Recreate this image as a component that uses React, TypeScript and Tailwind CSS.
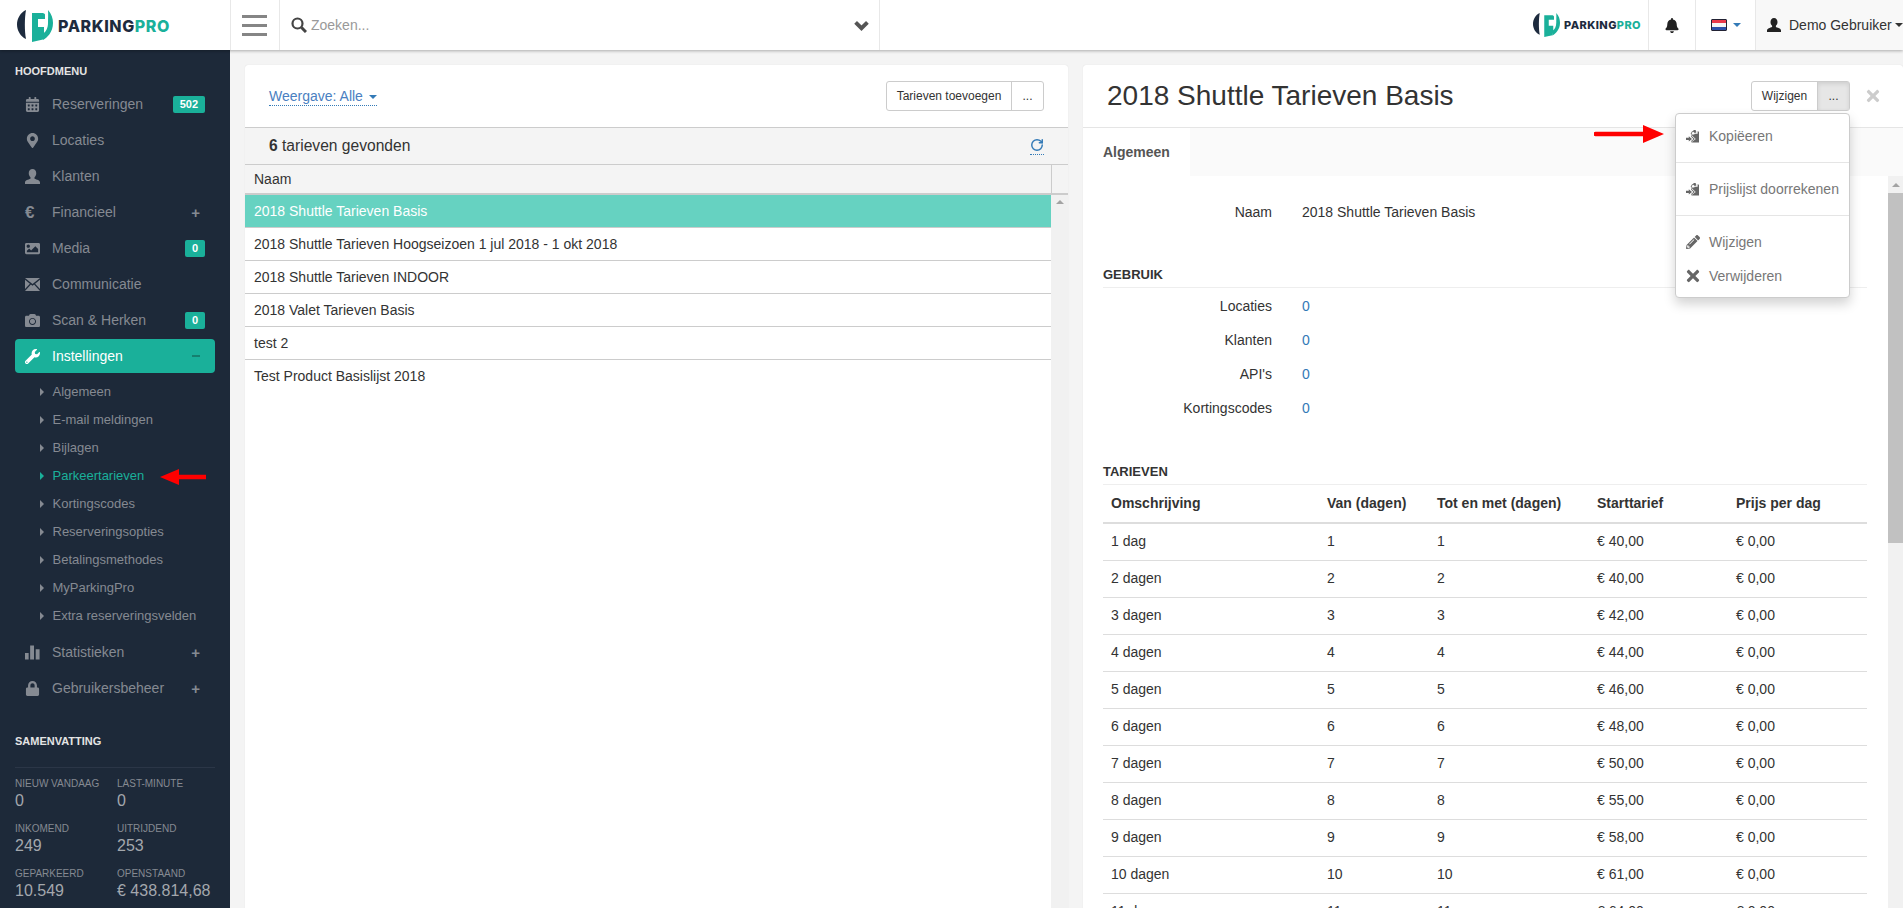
import { FaBell, FaCalendarAlt, FaCamera, FaImage, FaLock, FaMapMarkerAlt, FaPencilAlt, FaTimes, FaWrench } from 'react-icons/fa';
import { RotateCw } from 'lucide-react';
import type { ReactNode } from 'react';

function UserIcon({ className }: { className?: string }) {
  return (
    <svg viewBox="0 0 14 14" className={className} fill="currentColor">
      <path d="M7 0c2.2 0 3.5 1.8 3.5 4 0 1.6-.7 3-1.6 3.8V9c2 .8 5.1 1.4 5.1 3.5V14H0v-1.5C0 10.400 3.100 9.800 5.100 9V7.800C4.200 7 3.500 5.600 3.500 4 3.500 1.800 4.800 0 7 0z" />
    </svg>
  );
}

function EnvelopeIcon({ className }: { className?: string }) {
  return (
    <svg viewBox="0 0 14 12" className={className} fill="currentColor">
      <path d="M0 0l7 5.600L14 0zM0 1.500v8.700l4.600-4.900zM14 1.500v8.700L9.400 5.300zM5.500 6L0 12h14L8.500 6 7 7.200z" />
    </svg>
  );
}

function BarsIcon({ className }: { className?: string }) {
  return (
    <svg viewBox="0 0 14 13" className={className} fill="currentColor">
      <path d="M0 7h3.400v6H0zM4.800 0h3.600v13H4.800zM10 3.500h3.600V13H10z" />
    </svg>
  );
}

function CopyIcon({ className }: { className?: string }) {
  return (
    <svg viewBox="0 0 14 14" className={className} fill="currentColor">
      <path d="M5 4.500L6.500 2H8V.500h2.500V2H11v1.500H8.500V2.800H7L6 4.800V7l3.500 3.200L6 13v1h8V2h-2v-.500h2.500V14H5.500v-1.500l2.500-2.300-2.500-2.300V5.500z" />
      <path d="M9 4.500h3.500V2.500H14V14H6.500v-.8l4-3-4-3.700V5.500H9z" />
      <path d="M0 9h3V7.300l3.500 2.900L3 13v-1.700H0z" />
    </svg>
  );
}

function SearchGlyph({ className }: { className?: string }) {
  return (
    <svg viewBox="0 0 16 16" className={className} fill="none" stroke="currentColor">
      <circle cx="6.500" cy="6.500" r="5" strokeWidth="2.200" />
      <path d="M10.500 10.500L15 15" strokeWidth="3" />
    </svg>
  );
}

function ChevronGlyph({ className }: { className?: string }) {
  return (
    <svg viewBox="0 0 14 10" className={className} fill="none" stroke="currentColor" strokeWidth="3.600">
      <path d="M1.500 2l5.500 5.500L12.500 2" />
    </svg>
  );
}

function Logo({ small }: { small?: boolean }) {
  return (
    <div className="flex items-center">
      <svg viewBox="0 0 36 32" className={small ? 'w-[27px] h-[24px]' : 'w-[36px] h-[32px]'}>
        <path d="M9 0C3.500 2.500 0 8.500 0 14.500S3.500 26.500 9 29C7.500 21 7.500 8 9 0z" fill="#1d2b3e" />
        <path d="M15 3h10c1.500 0 2.500.500 3 1.500V9h-7v8h6v7l-1 5.500L15 32z" fill="#1ab09a" />
        <path d="M31 0c3.500 3.500 5 8.500 5 13 0 9-6 15-10 17v-6.500C29 22 31 18 31 13c0-4 .3-9 0-13z" fill="#1ab09a" />
      </svg>
      <span
        className={
          small
            ? "ml-[4px] text-[11px] tracking-[0.4px] font-extrabold font-['Inter',sans-serif] text-[#1d2b3e]"
            : "ml-[5px] text-[16px] tracking-[0.6px] font-extrabold font-['Inter',sans-serif] text-[#1d2b3e]"
        }
      >
        PARKING<span className="text-[#1ab09a]">PRO</span>
      </span>
    </div>
  );
}

function Badge({ children }: { children: ReactNode }) {
  return <span className="ml-auto mr-[10px] h-[17px] min-w-[20px] px-[7px] rounded-[2px] bg-[#1ab09a] text-white text-[11px] font-bold flex items-center justify-center">{children}</span>;
}

function MenuItem({ icon, label, badge, plus }: { icon: ReactNode; label: string; badge?: string; plus?: boolean }) {
  return (
    <div className="h-[36px] mx-[15px] flex items-center text-[14px] text-[#858a92]">
      <span className="w-[37px] pl-[10px] flex items-center">{icon}</span>
      <span>{label}</span>
      {badge && <Badge>{badge}</Badge>}
      {plus && <span className="ml-auto mr-[15px] text-[15px] font-bold leading-none">+</span>}
    </div>
  );
}

function SubItem({ label, active }: { label: string; active?: boolean }) {
  return (
    <div className={active ? 'h-[28px] flex items-center text-[13px] text-[#1ab09a]' : 'h-[28px] flex items-center text-[13px] text-[#858a92]'}>
      <span className="ml-[40px] mr-[8.500px] w-0 h-0 border-y-[4px] border-y-transparent border-l-[4px] border-l-current" />
      {label}
    </div>
  );
}

function Stat({ label, value }: { label: string; value: string }) {
  return (
    <div className="h-[45px]">
      <div className="text-[10px] leading-[14px] text-[#858a92]">{label}</div>
      <div className="text-[16px] leading-[20px] text-[#a3a7ad]">{value}</div>
    </div>
  );
}

function Sidebar() {
  const ic = 'w-[15px] h-[15px]';
  return (
    <aside className="w-[230px] shrink-0 bg-[#1d2939] pt-[13px] relative">
      <div className="px-[15px] text-[11px] leading-[17px] font-bold text-[#e4e4e4] mb-[6px]">HOOFDMENU</div>
      <MenuItem icon={<FaCalendarAlt className={ic} />} label="Reserveringen" badge="502" />
      <MenuItem icon={<FaMapMarkerAlt className={ic} />} label="Locaties" />
      <MenuItem icon={<UserIcon className={ic} />} label="Klanten" />
      <MenuItem icon={<span className="text-[17px] font-bold leading-none">€</span>} label="Financieel" plus />
      <MenuItem icon={<FaImage className={ic} />} label="Media" badge="0" />
      <MenuItem icon={<EnvelopeIcon className={ic} />} label="Communicatie" />
      <MenuItem icon={<FaCamera className={ic} />} label="Scan & Herken" badge="0" />
      <div className="h-[36px] flex items-center">
        <div className="mx-[15px] w-[200px] h-[34px] rounded-[4px] bg-[#1ab09a] flex items-center text-[14px] text-white">
          <span className="w-[37px] pl-[10px] flex items-center"><FaWrench className={ic} /></span>
          Instellingen
          <span className="ml-auto mr-[15px] w-[8px] h-[2px] bg-[#15806f]" />
        </div>
      </div>
      <div className="pt-[4px] pb-[4px]">
        <SubItem label="Algemeen" />
        <SubItem label="E-mail meldingen" />
        <SubItem label="Bijlagen" />
        <SubItem label="Parkeertarieven" active />
        <SubItem label="Kortingscodes" />
        <SubItem label="Reserveringsopties" />
        <SubItem label="Betalingsmethodes" />
        <SubItem label="MyParkingPro" />
        <SubItem label="Extra reserveringsvelden" />
      </div>
      <MenuItem icon={<BarsIcon className={ic} />} label="Statistieken" plus />
      <MenuItem icon={<FaLock className={ic} />} label="Gebruikersbeheer" plus />
      <div className="mt-[27px] mx-[15px] pb-[18px] text-[11px] leading-[16px] font-bold text-[#e4e4e4] border-b border-[#2b3647]">SAMENVATTING</div>
      <div className="mx-[15px] pt-[9px] grid grid-cols-[102px_1fr]">
        <Stat label="NIEUW VANDAAG" value="0" />
        <Stat label="LAST-MINUTE" value="0" />
        <Stat label="INKOMEND" value="249" />
        <Stat label="UITRIJDEND" value="253" />
        <Stat label="GEPARKEERD" value="10.549" />
        <Stat label="OPENSTAAND" value="€ 438.814,68" />
      </div>
      <svg viewBox="0 0 46 16" className="absolute left-[160px] top-[419px] w-[46px] h-[16px]">
        <path d="M0 8L19 0v5.800h27v4.400H19V16z" fill="#f00" />
      </svg>
    </aside>
  );
}

function TopBar() {
  return (
    <header className="h-[50px] shrink-0 bg-white flex relative z-10 shadow-[0_1px_3px_rgba(0,0,0,0.3)]">
      <div className="w-[231px] pl-[17px] pt-[2px] flex items-center border-r border-[#e8e8e8]">
        <Logo />
      </div>
      <div className="w-[49px] pl-[11px] flex flex-col justify-center gap-[6px] border-r border-[#e8e8e8]">
        <span className="w-[25px] h-[3px] bg-[#858585]" />
        <span className="w-[25px] h-[3px] bg-[#858585]" />
        <span className="w-[25px] h-[3px] bg-[#858585]" />
      </div>
      <div className="w-[600px] pl-[11px] pr-[10px] flex items-center border-r border-[#e8e8e8] text-[14px] text-[#999]">
        <SearchGlyph className="w-[16px] h-[16px] text-[#444] mr-[4px]" />
        Zoeken...
        <ChevronGlyph className="ml-auto w-[15px] h-[11px] text-[#555]" />
      </div>
      <div className="ml-auto pr-[7px] flex items-center"><Logo small /></div>
      <div className="w-[48px] flex items-center justify-center border-x border-[#e8e8e8]">
        <FaBell className="w-[14px] h-[15px] text-[#222]" />
      </div>
      <div className="w-[60px] pl-[15px] flex items-center border-r border-[#e8e8e8]">
        <span className="w-[16px] h-[12px] flex flex-col border border-[#223] rounded-[1px] overflow-hidden">
          <span className="flex-1 bg-[#e8394a]" />
          <span className="flex-1 bg-[#f4f4f4]" />
          <span className="flex-1 bg-[#2a4fa8]" />
        </span>
        <span className="ml-[6px] w-0 h-0 border-x-[4px] border-x-transparent border-t-[4px] border-t-[#337ab7]" />
      </div>
      <div className="w-[147px] bg-[#f8f8f8] pl-[9px] flex items-center text-[14px] text-[#333] whitespace-nowrap overflow-hidden">
        <UserIcon className="shrink-0 w-[14px] h-[14px] text-[#222] ml-[2px] mr-[8px]" />
        Demo Gebruiker
        <span className="shrink-0 ml-[3px] w-0 h-0 border-x-[4px] border-x-transparent border-t-[4px] border-t-[#333]" />
      </div>
    </header>
  );
}

function ListPanel() {
  const rows = [
    '2018 Shuttle Tarieven Hoogseizoen 1 jul 2018 - 1 okt 2018',
    '2018 Shuttle Tarieven INDOOR',
    '2018 Valet Tarieven Basis',
    'test 2',
  ];
  return (
    <section className="w-[823px] shrink-0 bg-white rounded-t-[3px] flex flex-col shadow-[0_0_1px_rgba(0,0,0,0.15)] text-[14px] text-[#333]">
      <div className="h-[63px] shrink-0 pl-[24px] pr-[24px] flex items-center justify-between border-b border-[#ccc]">
        <span className="mt-[2px] flex items-center text-[#4a7fc1] border-b border-dotted border-[#337ab7] leading-[17px]">
          Weergave: Alle
          <span className="ml-[6px] w-0 h-0 border-x-[4px] border-x-transparent border-t-[4px] border-t-[#337ab7]" />
        </span>
        <div className="flex h-[30px] text-[12px] border border-[#ccc] rounded-[3px]">
          <span className="w-[125px] flex items-center justify-center border-r border-[#ccc]">Tarieven toevoegen</span>
          <span className="w-[31px] flex items-center justify-center">...</span>
        </div>
      </div>
      <div className="h-[37px] shrink-0 pl-[24px] pr-[24px] bg-[#f4f4f4] flex items-center justify-between border-b border-[#ccc]">
        <span className="text-[15.600px]"><b>6</b> tarieven gevonden</span>
        <span className="border-b border-dotted border-[#337ab7] pb-[2px]">
          <RotateCw size={14} strokeWidth={2.5} className="text-[#337ab7]" />
        </span>
      </div>
      <div className="h-[30px] shrink-0 bg-[#f4f4f4] flex border-b-2 border-[#ccc]">
        <div className="flex-1 pl-[9px] flex items-center border-r border-[#ccc]">Naam</div>
        <div className="w-[16px]" />
      </div>
      <div className="flex-1 flex min-h-0">
        <div className="flex-1">
          <div className="h-[33px] pl-[9px] flex items-center bg-[#66d2c1] text-white border-b border-[#ccc]">2018 Shuttle Tarieven Basis</div>
          {rows.map((r) => (
            <div key={r} className="h-[33px] pl-[9px] flex items-center border-b border-[#ccc]">{r}</div>
          ))}
          <div className="h-[33px] pl-[9px] flex items-center">Test Product Basislijst 2018</div>
        </div>
        <div className="w-[17px] bg-[#f1f1f1] pt-[5px] flex justify-center">
          <span className="w-0 h-0 border-x-[4px] border-x-transparent border-b-[4px] border-b-[#a3a3a3]" />
        </div>
      </div>
    </section>
  );
}

function DetailRow({ label, children }: { label: string; children: ReactNode }) {
  return (
    <div className="flex h-[34px] items-center">
      <div className="w-[169px] text-right">{label}</div>
      <div className="ml-[30px]">{children}</div>
    </div>
  );
}

function DetailPanel() {
  const tarieven = ['40,00', '40,00', '42,00', '44,00', '46,00', '48,00', '50,00', '55,00', '58,00', '61,00', '64,00'];
  return (
    <section className="flex-1 min-w-0 bg-white rounded-t-[3px] flex flex-col relative shadow-[0_0_1px_rgba(0,0,0,0.15)] text-[14px] text-[#333]">
      <div className="h-[63px] shrink-0 pl-[24px] flex items-center border-b border-[#e5e5e5]">
        <h1 className="text-[28px]">2018 Shuttle Tarieven Basis</h1>
        <div className="ml-auto flex h-[30px] text-[12px] border border-[#ccc] rounded-[3px]">
          <span className="w-[66px] flex items-center justify-center border-r border-[#ccc]">Wijzigen</span>
          <span className="w-[31px] flex items-center justify-center bg-[#e6e6e6] shadow-[inset_0_2px_4px_rgba(0,0,0,0.1)]">...</span>
        </div>
        <FaTimes className="ml-[14px] mr-[21px] w-[18px] h-[18px] text-[#ccc]" />
      </div>
      <div className="h-[48px] shrink-0 bg-[#fafafa] flex">
        <div className="w-[107px] bg-white pl-[20px] flex items-center text-[14px] font-bold text-[#555]">Algemeen</div>
      </div>
      <div className="flex-1 min-h-0 flex overflow-hidden">
        <div className="flex-1 min-w-0 pl-[20px] pr-[21px]">
          <div className="pt-[19px]">
            <DetailRow label="Naam">2018 Shuttle Tarieven Basis</DetailRow>
          </div>
          <h2 className="mt-[36px] h-[23px] mb-[1px] text-[13px] font-bold border-b border-[#eee]">GEBRUIK</h2>
          <DetailRow label="Locaties"><span className="text-[#337ab7]">0</span></DetailRow>
          <DetailRow label="Klanten"><span className="text-[#337ab7]">0</span></DetailRow>
          <DetailRow label="API's"><span className="text-[#337ab7]">0</span></DetailRow>
          <DetailRow label="Kortingscodes"><span className="text-[#337ab7]">0</span></DetailRow>
          <h2 className="mt-[37px] h-[23px] text-[13px] font-bold border-b border-[#eee]">TARIEVEN</h2>
          <table className="w-[764px] table-fixed">
            <thead>
              <tr className="h-[38px] border-b-2 border-[#ddd] text-left">
                <th className="w-[216px] pl-[8px]">Omschrijving</th>
                <th className="w-[110px] pl-[8px]">Van (dagen)</th>
                <th className="w-[160px] pl-[8px]">Tot en met (dagen)</th>
                <th className="w-[139px] pl-[8px]">Starttarief</th>
                <th className="w-[139px] pl-[8px]">Prijs per dag</th>
              </tr>
            </thead>
            <tbody>
              {tarieven.map((t, i) => (
                <tr key={i} className="h-[37px] border-b border-[#ddd]">
                  <td className="pl-[8px]">{i + 1} {i === 0 ? 'dag' : 'dagen'}</td>
                  <td className="pl-[8px]">{i + 1}</td>
                  <td className="pl-[8px]">{i + 1}</td>
                  <td className="pl-[8px]">€ {t}</td>
                  <td className="pl-[8px]">€ 0,00</td>
                </tr>
              ))}
            </tbody>
          </table>
        </div>
        <div className="w-[15px] shrink-0 bg-[#f1f1f1] flex flex-col">
          <div className="h-[17px] flex items-center justify-center">
            <span className="w-0 h-0 border-x-[4px] border-x-transparent border-b-[4px] border-b-[#a3a3a3]" />
          </div>
          <div className="h-[350px] bg-[#c1c1c1]" />
        </div>
      </div>

      {/* dropdown of the ... button */}
      <div className="absolute left-[592px] top-[48px] z-20 w-[175px] h-[185px] bg-white border border-[#ccc] rounded-[4px] shadow-[0_6px_12px_rgba(0,0,0,0.175)] text-[#777]">
        <div className="h-[49px] pl-[10px] pb-[4px] flex items-center border-b border-[#e5e5e5]"><CopyIcon className="w-[13px] h-[14px] text-[#666] mr-[10px]" />Kopiëeren</div>
        <div className="h-[53px] pl-[10px] flex items-center border-b border-[#e5e5e5]"><CopyIcon className="w-[13px] h-[14px] text-[#666] mr-[10px]" />Prijslijst doorrekenen</div>
        <div className="h-[34px] mt-[9px] pl-[10px] flex items-center"><FaPencilAlt className="w-[14px] h-[14px] text-[#666] mr-[9px]" />Wijzigen</div>
        <div className="h-[34px] pl-[8px] flex items-center"><FaTimes className="w-[18px] h-[18px] text-[#666] mr-[7px]" />Verwijderen</div>
      </div>

      {/* red arrow pointing at Kopiëeren */}
      <svg viewBox="0 0 70 18" className="absolute left-[511px] top-[60px] w-[70px] h-[18px]">
        <path d="M70 9L49 0v6.800H1.500a2.200 2.200 0 000 4.400H49V18z" fill="#f00" />
      </svg>
    </section>
  );
}

export default function App() {
  return (
    <div className="h-screen overflow-hidden flex flex-col bg-[#f4f4f4] font-['Liberation_Sans',Arial,sans-serif]">
      <TopBar />
      <div className="flex-1 min-h-0 flex">
        <Sidebar />
        <main className="flex-1 min-w-0 flex gap-[15px] pl-[15px] pt-[15px]">
          <ListPanel />
          <DetailPanel />
        </main>
      </div>
    </div>
  );
}
